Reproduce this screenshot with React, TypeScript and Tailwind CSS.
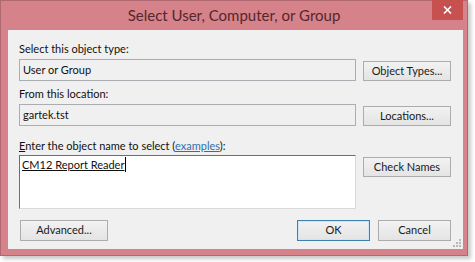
import React from "react";

const font = { fontFamily: 'Lato, "Noto Sans", sans-serif' };

function Btn({
  label,
  w,
  h = "h-[20px]",
  primary,
  className = "",
}: {
  label: React.ReactNode;
  w: string;
  h?: string;
  primary?: boolean;
  className?: string;
}) {
  return (
    <div
      className={`${w} ${h} ${className} flex items-center justify-center border text-[11px] text-[#1a1a1a] bg-gradient-to-b from-[#f2f2f2] to-[#e4e4e4] ${
        primary ? "border-[#3c7fb1] shadow-[inset_0_0_0_1px_#cde6f7]" : "border-[#acacac]"
      }`}
    >
      {label}
    </div>
  );
}

function ReadOnlyField({ value }: { value: string }) {
  return (
    <div className="w-[337px] h-[22px] border border-[#abadb3] bg-[#f0f0f0] flex items-center pl-[3px] text-[11px] text-[#111]">
      {value}
    </div>
  );
}

export default function App() {
  return (
    <div className="w-[475px] h-[262px] bg-white overflow-hidden" style={font}>
      <div className="w-[468px] h-[256px] bg-[#d5828a] border border-[#b06970] shadow-[3px_3px_4px_rgba(0,0,0,0.22)] flex flex-col">
        {/* title bar */}
        <div className="relative h-[29px] flex items-center justify-center">
          <span className="text-[15px] text-[#55272c] pb-[1px]">
            Select User, Computer, or Group
          </span>
          <div className="absolute right-[4px] top-[-1px] w-[31px] h-[20px] bg-[#c75050] flex items-center justify-center">
            <svg width="9" height="8" viewBox="0 0 9 8">
              <path d="M1 0.5 L8 7.5 M8 0.5 L1 7.5" stroke="white" strokeWidth="1.6" />
            </svg>
          </div>
        </div>

        {/* client area */}
        <div className="relative ml-[7px] w-[455px] h-[219px] bg-[#f0f0f0] pl-[11px] pt-[11px] text-[11px] text-[#111]">
          <div className="h-[15px] leading-[15px]">Select this object type:</div>
          <div className="mt-[3px] flex items-start">
            <ReadOnlyField value="User or Group" />
            <Btn label="Object Types..." w="w-[88px]" className="ml-[7px] mt-[2px]" />
          </div>

          <div className="mt-[5px] h-[15px] leading-[15px]">From this location:</div>
          <div className="mt-[3px] flex items-start">
            <ReadOnlyField value="gartek.tst" />
            <Btn label="Locations..." w="w-[88px]" className="ml-[7px] mt-[2px]" />
          </div>

          <div className="mt-[12px] h-[15px] leading-[15px]">
            <span className="underline">E</span>nter the object name to select (
            <span className="text-[#2f6fae] underline">examples</span>):
          </div>
          <div className="mt-[2px] flex items-start">
            <div className="w-[337px] h-[54px] bg-white border border-[#dadada] border-t-[#6e6e6e] border-l-[#6e6e6e] pl-[2px] pt-[1px]">
              <span className="underline border-r border-black pr-[1px] leading-[15px] inline-block">
                CM12 Report Reader
              </span>
            </div>
            <Btn label="Check Names" w="w-[88px]" className="ml-[7px] mt-[2px]" />
          </div>

          <div className="mt-[11px] flex items-start">
            <Btn label="Advanced..." w="w-[88px]" h="h-[21px]" className="ml-[1px]" />
            <Btn label="OK" w="w-[73px]" h="h-[21px]" primary className="ml-[189px]" />
            <Btn label="Cancel" w="w-[73px]" h="h-[21px]" className="ml-[8px]" />
          </div>

          {/* resize grip */}
          <svg className="absolute right-[2px] bottom-[2px]" width="8" height="8" viewBox="0 0 8 8">
            <rect x="6" y="0" width="2" height="2" fill="#b8b8b8" />
            <rect x="3" y="3" width="2" height="2" fill="#b8b8b8" />
            <rect x="6" y="3" width="2" height="2" fill="#b8b8b8" />
            <rect x="0" y="6" width="2" height="2" fill="#b8b8b8" />
            <rect x="3" y="6" width="2" height="2" fill="#b8b8b8" />
            <rect x="6" y="6" width="2" height="2" fill="#b8b8b8" />
          </svg>
        </div>
      </div>
    </div>
  );
}
